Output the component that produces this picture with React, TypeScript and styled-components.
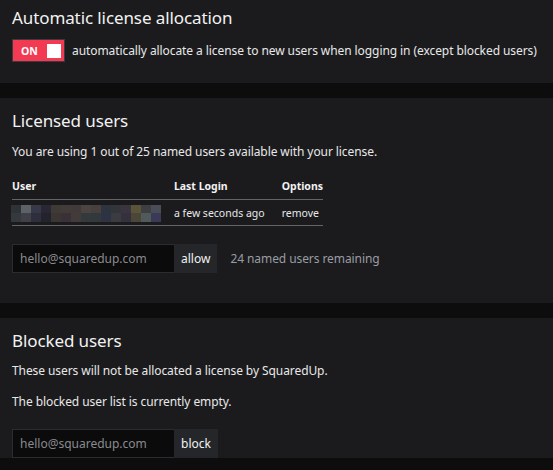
import React from "react";
import styled, { createGlobalStyle } from "styled-components";

const Global = createGlobalStyle`
  html, body { margin: 0; padding: 0; background: #0d0d0e; }
  body { font-family: "Noto Sans", "Open Sans", sans-serif; color: #e8e8e8; }
  * { box-sizing: border-box; }
`;

const Page = styled.div`
  display: flex;
  flex-direction: column;
  gap: 15px;
  width: 553px;
  height: 470px;
  overflow: hidden;
  background: #0d0d0e;
`;

const Panel = styled.section<{ $h?: number; $pt?: number }>`
  background: #1b1b1e;
  padding: ${(p) => p.$pt ?? 11}px 12px 0 12px;
  height: ${(p) => (p.$h ? `${p.$h}px` : "auto")};
  flex-shrink: 0;
  display: flex;
  flex-direction: column;
  align-items: flex-start;
`;

const Heading = styled.h2`
  margin: 0;
  font-size: 17px;
  font-weight: 400;
  line-height: 24px;
  color: #f2f2f2;
  letter-spacing: -0.1px;
`;

const ToggleRow = styled.div`
  display: flex;
  align-items: center;
  gap: 7px;
  margin-top: 9px;
`;

const Toggle = styled.div`
  width: 53px;
  height: 23px;
  background: #f23a52;
  border: 1px solid #3a3a40;
  display: flex;
  align-items: center;
  justify-content: space-between;
  padding: 0 3px 0 8px;
`;

const ToggleLabel = styled.span`
  font-weight: 700;
  font-size: 10.5px;
  line-height: 12px;
  color: #fff;
`;

const Knob = styled.span`
  width: 14px;
  height: 14px;
  background: #fff;
`;

const Text = styled.p<{ $mt?: number }>`
  margin: ${(p) => p.$mt ?? 0}px 0 0 0;
  font-size: 12px;
  line-height: 18px;
  letter-spacing: -0.08px;
  color: #e8e8e8;
  white-space: nowrap;
`;

const Table = styled.table`
  margin-top: 18px;
  width: 311px;
  border-collapse: collapse;
  font-size: 10.5px;
  line-height: 14px;
`;

const Th = styled.th<{ $w?: number }>`
  text-align: left;
  font-weight: 700;
  padding: 0 0 6px 0;
  border-bottom: 1px solid #646468;
  width: ${(p) => (p.$w ? `${p.$w}px` : "auto")};
  color: #f2f2f2;
`;

const Td = styled.td`
  padding: 0;
  height: 26px;
  border-bottom: 1px solid #646468;
  color: #e8e8e8;
  vertical-align: middle;
`;

const Pixels = styled.div`
  display: grid;
  grid-template-columns: repeat(15, 10px);
  grid-template-rows: 8px 9px;
  width: 150px;
  margin-left: -1px;
  margin-top: 1px;
`;

const Px = styled.span<{ $c: string }>`
  background: ${(p) => p.$c};
`;

const FormRow = styled.div<{ $mt: number }>`
  display: flex;
  align-items: center;
  margin-top: ${(p) => p.$mt}px;
`;

const Input = styled.div`
  width: 162px;
  height: 29px;
  background: #0b0b0c;
  border: 1px solid #2c2c30;
  border-right: none;
  display: flex;
  align-items: center;
  padding-left: 7px;
  font-size: 12px;
  color: #8a8a8e;
`;

const Button = styled.div`
  height: 29px;
  background: #24262a;
  display: flex;
  align-items: center;
  padding: 0 7px;
  font-size: 12px;
  color: #f2f2f2;
`;

const Remaining = styled.span`
  margin-left: 13px;
  font-size: 12px;
  letter-spacing: -0.08px;
  color: #9a9ba2;
`;

const pixelColors = [
  ["#2e3338", "#5c6268", "#373848", "#2a2734", "#403a36", "#423b38", "#403a3a", "#4b4440", "#48403c", "#2e3340", "#33353a", "#3a3440", "#5a5438", "#3e3f42", "#4a4c58"],
  ["#35383c", "#404048", "#2e2e3c", "#22232c", "#3c3632", "#3a3038", "#433a3a", "#343a3c", "#33383c", "#2e3344", "#3a3c42", "#34303c", "#4c4638", "#505a58", "#3a3a58"],
];

export default function App() {
  return (
    <>
      <Global />
      <Page>
        <Panel $h={83} $pt={6}>
          <Heading>Automatic license allocation</Heading>
          <ToggleRow>
            <Toggle>
              <ToggleLabel>ON</ToggleLabel>
              <Knob />
            </Toggle>
            <Text>automatically allocate a license to new users when logging in (except blocked users)</Text>
          </ToggleRow>
        </Panel>
        <Panel $h={205}>
          <Heading>Licensed users</Heading>
          <Text $mt={10}>You are using 1 out of 25 named users available with your license.</Text>
          <Table>
            <thead>
              <tr>
                <Th $w={162}>User</Th>
                <Th $w={108}>Last Login</Th>
                <Th>Options</Th>
              </tr>
            </thead>
            <tbody>
              <tr>
                <Td>
                  <Pixels>
                    {pixelColors.flatMap((row, r) =>
                      row.map((c, i) => <Px key={`${r}-${i}`} $c={c} />)
                    )}
                  </Pixels>
                </Td>
                <Td>a few seconds ago</Td>
                <Td>remove</Td>
              </tr>
            </tbody>
          </Table>
          <FormRow $mt={18}>
            <Input>hello@squaredup.com</Input>
            <Button>allow</Button>
            <Remaining>24 named users remaining</Remaining>
          </FormRow>
        </Panel>
        <Panel>
          <Heading>Blocked users</Heading>
          <Text $mt={9}>These users will not be allocated a license by SquaredUp.</Text>
          <Text $mt={13}>The blocked user list is currently empty.</Text>
          <FormRow $mt={18}>
            <Input>hello@squaredup.com</Input>
            <Button>block</Button>
          </FormRow>
        </Panel>
      </Page>
    </>
  );
}
